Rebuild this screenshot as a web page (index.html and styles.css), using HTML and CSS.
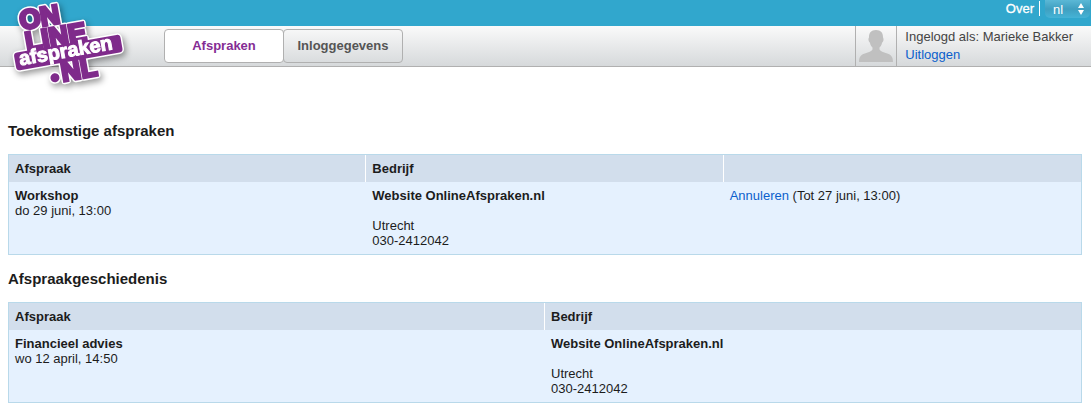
FILE: index.html
```html
<!DOCTYPE html>
<html lang="nl">
<head>
  <meta charset="UTF-8">
  <meta name="viewport" content="width=device-width, initial-scale=1.0">
  <title>OnlineAfspraken.nl</title>
  <link rel="stylesheet" href="styles.css">
</head>
<body>
  <header>
    <a class="logo" href="#" aria-label="OnlineAfspraken.nl">
      <svg width="140" height="100" viewBox="0 0 140 100">
        <defs>
          <g id="logo-shape" transform="rotate(-10 68 48)">
            <text class="logo-big" x="25" y="22">ON</text>
            <text class="logo-big" x="27" y="44">LINE</text>
            <rect x="15" y="45" width="105" height="15" rx="2" />
            <circle cx="50" cy="75" r="3" />
            <text class="logo-big" x="57" y="80">NL</text>
          </g>
        </defs>
        <use class="logo-outline" href="#logo-shape" />
        <use class="logo-fill" href="#logo-shape" />
        <text class="logo-name" x="18" y="57" transform="rotate(-10 68 48)">afspraken</text>
      </svg>
    </a>

    <div class="top-bar">
      <a class="over" href="#">Over</a>
      <div class="language">
        <select id="language" aria-label="Taal">
          <option>nl</option>
          <option>en</option>
        </select>
        <svg class="arrows" width="6" height="12" viewBox="0 0 6 12">
          <path d="M3 0L6 5H0zM3 12L0 7H6z" fill="#fff" />
        </svg>
      </div>
    </div>

    <div class="menu-bar">
      <nav>
        <a class="tab active" href="#">Afspraken</a>
        <a class="tab" href="#">Inloggegevens</a>
      </nav>
      <div class="user">
        <div class="avatar">
          <svg width="34" height="32" viewBox="0 0 34 32">
            <path d="M17 0c-5 0-7 3-7 7 0 1-.8 1.500-.5 3 .2 1.400 1 2 1.500 3 .4 2 1.500 3.500 2.500 4.500v2c-1 2-4 2.700-7 3.700-4 1.300-6.500 2.800-6.500 8.800h34c0-6-2.500-7.500-6.500-8.800-3-1-6-1.700-7-3.700v-2c1-1 2.100-2.500 2.500-4.500.5-1 1.300-1.600 1.500-3 .3-1.500-.5-2-.5-3 0-4-2-7-7-7z" fill="#c0c0c0" />
          </svg>
        </div>
        <div class="user-info">
          <div>Ingelogd als: Marieke Bakker</div>
          <a href="#">Uitloggen</a>
        </div>
      </div>
    </div>
  </header>

  <main>
    <h2>Toekomstige afspraken</h2>
    <table>
      <thead>
        <tr>
          <th>Afspraak</th>
          <th>Bedrijf</th>
          <th></th>
        </tr>
      </thead>
      <tbody>
        <tr>
          <td><strong>Workshop</strong><br>do 29 juni, 13:00</td>
          <td><strong>Website OnlineAfspraken.nl</strong><br><br>Utrecht<br>030-2412042</td>
          <td><a href="#">Annuleren</a> (Tot 27 juni, 13:00)</td>
        </tr>
      </tbody>
    </table>

    <h2>Afspraakgeschiedenis</h2>
    <table>
      <thead>
        <tr>
          <th>Afspraak</th>
          <th>Bedrijf</th>
        </tr>
      </thead>
      <tbody>
        <tr>
          <td><strong>Financieel advies</strong><br>wo 12 april, 14:50</td>
          <td><strong>Website OnlineAfspraken.nl</strong><br><br>Utrecht<br>030-2412042</td>
        </tr>
      </tbody>
    </table>
  </main>
</body>
</html>
```
FILE: styles.css
```css
:root {
  --blue: #31a7cd;
  --purple: #7f2b8b;
  --link: #0b5fcc;
  --border: #b0b0b0;
}

* {
  margin: 0;
  padding: 0;
  box-sizing: border-box;
}

body {
  background-color: #fff;
  color: #1c1c1c;
  font-family: "Liberation Sans", Arial, Helvetica, sans-serif;
  font-size: 13px;
  line-height: 15px;
}

a {
  color: var(--link);
  text-decoration: none;
}

header {
  position: relative;
}

/* The logo hangs over both bars */
.logo {
  position: absolute;
  top: 0;
  left: 0;
}

.logo svg {
  display: block;
  filter: drop-shadow(2px 3px 3px rgba(0, 0, 0, 0.4));
}

.logo-big {
  font-size: 27px;
  font-weight: bold;
}

.logo-outline {
  fill: #fff;
  stroke: #fff;
  stroke-width: 6px;
  stroke-linejoin: round;
}

.logo-fill {
  fill: var(--purple);
  stroke: var(--purple);
  stroke-width: 3px;
}

.logo-name {
  fill: #fff;
  stroke: #fff;
  font-size: 20px;
  font-weight: bold;
}

.top-bar {
  display: flex;
  justify-content: flex-end;
  align-items: flex-start;
  height: 26px;
  background-color: var(--blue);
}

.over {
  margin-top: 1px;
  padding-right: 5px;
  border-right: 1px solid #fff;
  color: #fff;
  -webkit-text-stroke: 0.3px #fff;
}

.language {
  position: relative;
  margin: 0 1px 0 5px;
}

.language select {
  display: block;
  width: 45px;
  height: 18px;
  padding-left: 8px;
  appearance: none;
  border: none;
  border-radius: 0 0 5px 5px;
  background: linear-gradient(#5bb8d6, #3f9fc0 50%, #45b3d6);
  color: #fff;
  font: inherit;
}

.arrows {
  position: absolute;
  top: 3px;
  right: 6px;
  pointer-events: none;
}

.menu-bar {
  display: flex;
  justify-content: space-between;
  height: 41px;
  padding-left: 164px;
  border-bottom: 1px solid var(--border);
  background: linear-gradient(#fafafa, #d6d9db);
}

nav {
  display: flex;
  align-items: center;
}

.tab {
  width: 120px;
  margin-right: -1px;
  padding: 8px 0;
  border: 1px solid var(--border);
  border-radius: 4px;
  color: #555;
  font-weight: bold;
  line-height: 16px;
  text-align: center;
}

.tab.active {
  background-color: #fff;
  color: #852c94;
}

.user {
  display: flex;
}

.avatar {
  display: flex;
  align-items: center;
  padding: 0 3px;
  border: solid var(--border);
  border-width: 0 1px;
}

.user-info {
  padding: 2px 18px 0 8px;
  color: #444;
  line-height: 18px;
}

main {
  padding: 55px 9px 6px 8px;
}

h2 {
  margin-bottom: 14px;
  font-size: 15px;
  line-height: 18px;
}

table {
  width: 100%;
  margin-bottom: 15px;
  border: 1px solid #b9d9ea;
  border-spacing: 0;
  table-layout: fixed;
  background-color: #e5f1fe;
}

table:last-child {
  margin-bottom: 0;
}

th,
td {
  padding: 6px;
  text-align: left;
  vertical-align: top;
}

th {
  height: 27px;
  border-right: 1px solid #fff;
  background-color: #d2deec;
}

th:last-child {
  border-right: none;
}
```
